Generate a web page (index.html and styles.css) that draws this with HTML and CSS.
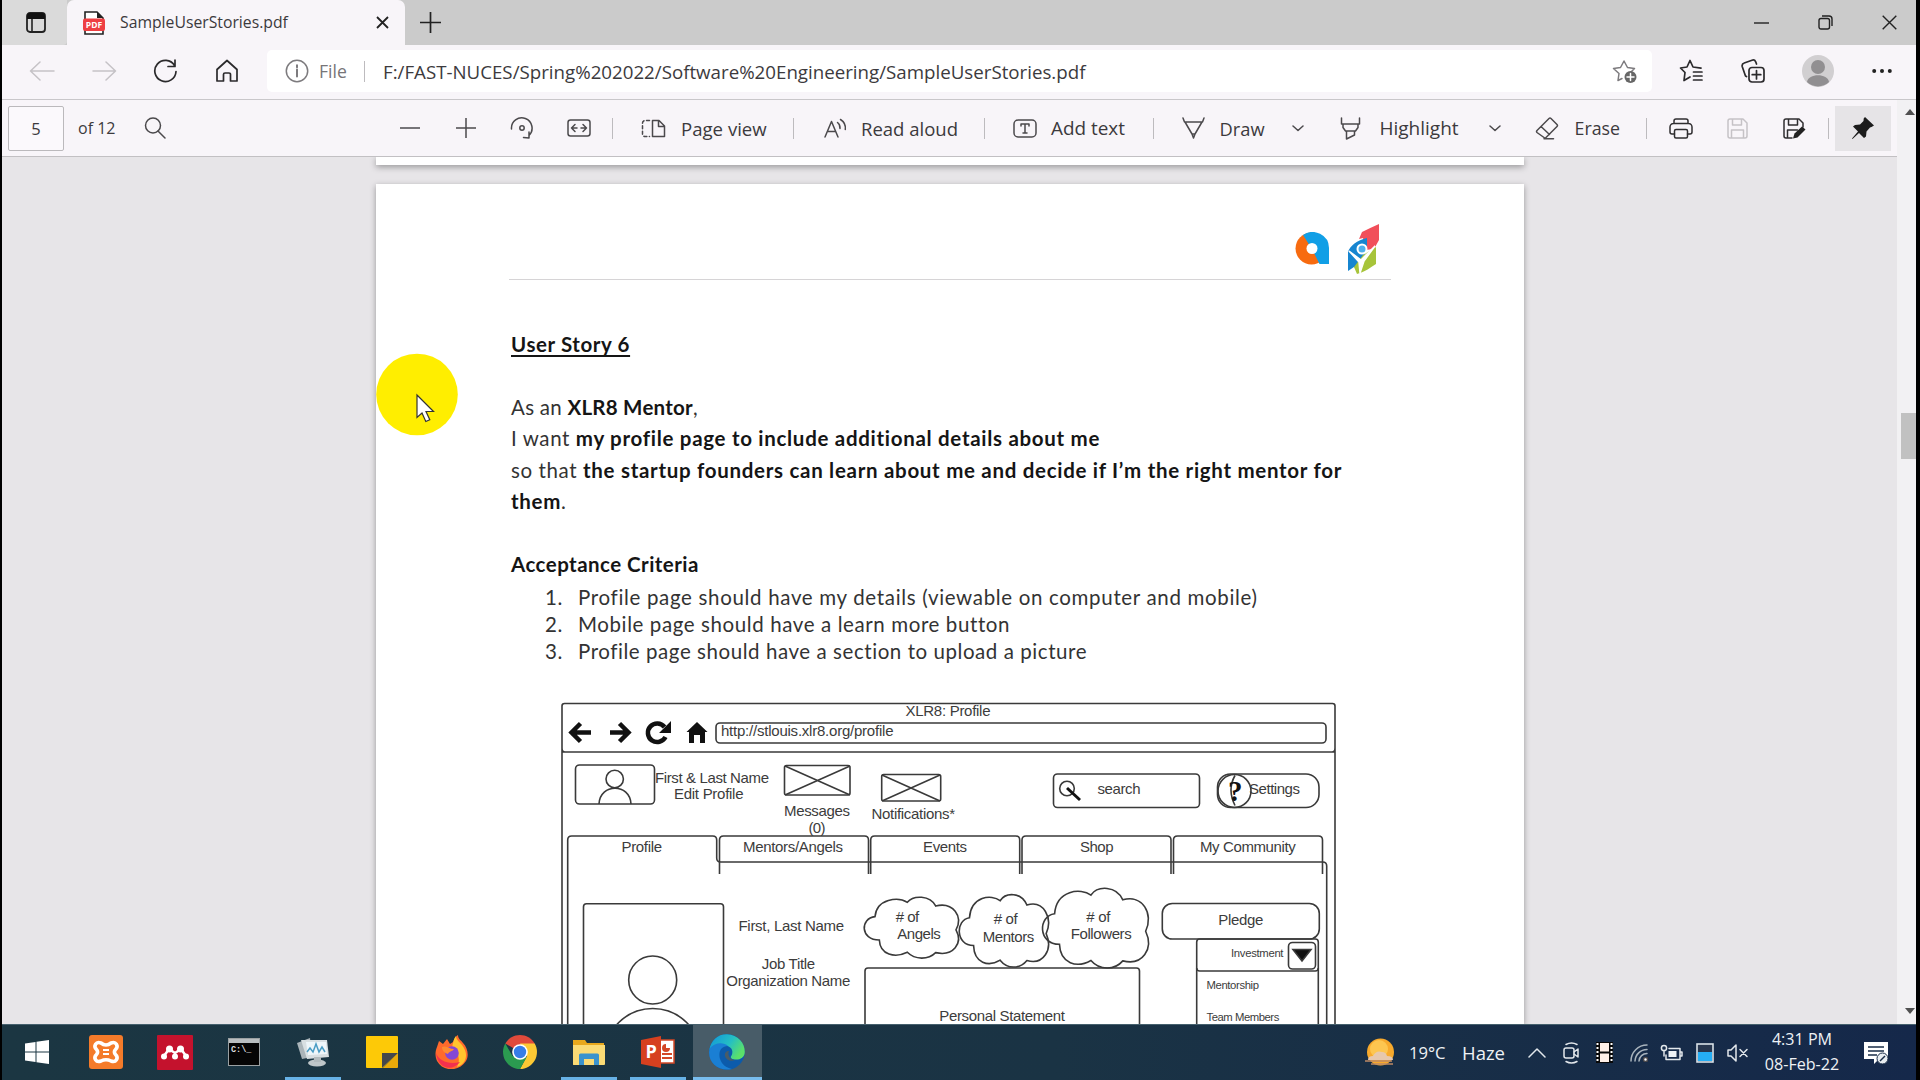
FILE: index.html
```
<!DOCTYPE html>
<html lang="en">
<head>
<meta charset="utf-8">
<title>SampleUserStories.pdf</title>
<link rel="stylesheet" href="styles.css">
</head>
<body>
<div class="screen">
  <header class="tabs">
    <div class="tab-actions">
      <svg width="20" height="21" viewBox="0 0 20 21"><rect x="1" y="1" width="18" height="19" rx="3" fill="none" stroke="#222" stroke-width="1.8"/><path d="M1 4a3 3 0 0 1 3-3h12a3 3 0 0 1 3 3v3H1z" fill="#111"/><path d="M6 7v13" stroke="#222" stroke-width="1.6"/></svg>
    </div>
    <div class="tab">
      <svg width="22" height="24" viewBox="0 0 22 24"><path d="M2 9V1h12l6 6v2M2 19v4h18v-4" fill="#fff" stroke="#222" stroke-width="1.6"/><path d="M14 1v6h6z" fill="#222"/><rect y="7.500" width="22" height="12.500" rx="2" fill="#ee3f43"/><text x="11" y="17" class="pdf-mark">PDF</text></svg>
      <span class="tab-title">SampleUserStories.pdf</span>
      <svg width="13" height="13" viewBox="0 0 13 13"><path d="M1 1l11 11M12 1L1 12" stroke="#222" stroke-width="1.8"/></svg>
    </div>
    <svg class="new-tab" width="21" height="21" viewBox="0 0 21 21"><path d="M10.500 0v21M0 10.500h21" stroke="#222" stroke-width="1.7"/></svg>
    <div class="window-buttons">
      <svg width="15" height="15" viewBox="0 0 15 15"><path d="M0 8h15" stroke="#222" stroke-width="1.400"/></svg>
      <svg width="15" height="15" viewBox="0 0 15 15"><rect x="1" y="3.500" width="10.500" height="10.500" rx="2" fill="none" stroke="#222" stroke-width="1.400"/><path d="M4 1h7a3 3 0 0 1 3 3v7" fill="none" stroke="#222" stroke-width="1.400"/></svg>
      <svg width="15" height="15" viewBox="0 0 15 15"><path d="M.7.700l13.600 13.600M14.300.700L.7 14.300" stroke="#222" stroke-width="1.400"/></svg>
    </div>
  </header>

  <nav class="address-row">
    <svg width="26" height="20" viewBox="0 0 26 20" class="line faint"><path d="M11 1L1.500 10l9.500 9M1.500 10H25"/></svg>
    <svg width="26" height="20" viewBox="0 0 26 20" class="line faint"><path d="M14 1l9.500 9L14 19M23.500 10H1"/></svg>
    <svg width="25" height="25" viewBox="0 0 25 25" class="line strong"><path d="M21.500 6.500A10.600 10.600 0 1 0 23 12.500M22 1v6.500h-7"/></svg>
    <svg width="24" height="24" viewBox="0 0 24 24" class="line strong"><path d="M2 10.500L12 1.500l10 9V22h-6.500v-6.500a1.500 1.500 0 0 0-1.500-1.500h-4a1.500 1.500 0 0 0-1.500 1.500V22H2z"/></svg>
    <div class="address">
      <svg width="24" height="24" viewBox="0 0 24 24" class="line grey"><circle cx="12" cy="12" r="10.700"/><path d="M12 10.500v7M12 6.300v2" stroke-width="2"/></svg>
      <span class="scheme">File</span>
      <i class="rule"></i>
      <span class="url">F:/FAST-NUCES/Spring%202022/Software%20Engineering/SampleUserStories.pdf</span>
      <svg width="26" height="25" viewBox="0 0 26 25" class="line grey"><path d="M6 21.500L7 14.500 1.500 9.500l7-1L12 2l3.500 6.500 7 1-3 3M6 21.500l4-2"/><circle cx="18.500" cy="18" r="6" fill="#666" stroke="none"/><path d="M18.500 14.500v7M15 18h7" stroke="#fff"/></svg>
    </div>
    <svg width="24" height="24" viewBox="0 0 24 24" class="line strong"><path d="M11 18l-6 3.500 1-8L1.500 9l6.500-1L11 1.500 14 8l8 1.200M14.500 13H23M14.500 17H23M14.500 21H23"/></svg>
    <svg width="24" height="24" viewBox="0 0 24 24" class="line strong"><rect x="8" y="8.500" width="15" height="14.500" rx="3"/><path d="M15.500 11.500v8.500M11.200 15.700h8.600M5.500 17.500l-1-.5L1.200 7.500a3 3 0 0 1 2-3.500L11 1.200a3 3 0 0 1 3.700 1.600l.8 2.200"/></svg>
    <svg width="32" height="32" viewBox="0 0 32 32"><circle cx="16" cy="16" r="16" fill="#d1cfd1"/><circle cx="16" cy="12" r="7" fill="#918f91"/><path d="M5 27c1-9 21-9 22 0a16 16 0 0 1-22 0z" fill="#918f91"/></svg>
    <svg width="20" height="6" viewBox="0 0 20 6"><circle cx="2.200" cy="3" r="2" fill="#222"/><circle cx="10" cy="3" r="2" fill="#222"/><circle cx="17.800" cy="3" r="2" fill="#222"/></svg>
  </nav>

  <main class="viewer">
    <section class="viewport">
      <div class="toolbar">
        <div class="page-number">5</div>
        <span class="small">of 12</span>
        <svg width="22" height="22" viewBox="0 0 22 22" class="line"><circle cx="9" cy="8.500" r="7.500"/><path d="M14 14l7 7"/></svg>
        <svg width="20" height="20" viewBox="0 0 20 20" class="line"><path d="M0 10h20"/></svg>
        <svg width="20" height="20" viewBox="0 0 20 20" class="line"><path d="M0 10h20M10 0v20"/></svg>
        <svg width="24" height="24" viewBox="0 0 24 24" class="line"><path d="M1.500 13A10.300 10.300 0 1 1 19 19.500M13.500 21.500l5.500.5v-6"/><circle cx="12" cy="12" r="2.200"/></svg>
        <svg width="24" height="18" viewBox="0 0 24 18" class="line"><rect x="1" y="1" width="22" height="16" rx="2.500"/><path d="M8 5.500L4.500 9 8 12.500M16 5.500L19.500 9 16 12.500M4.500 9H10M19.500 9H14"/></svg>
        <i class="rule"></i>
        <svg width="25" height="19" viewBox="0 0 25 19" class="line"><path d="M11.500 1.500H18l5.500 5.500v10.500h-12zM17.500 1.500v6h6"/><path d="M8.500 1.500H4a2.500 2.500 0 0 0-2.500 2.500v11A2.500 2.500 0 0 0 4 17.500h4.500" stroke-dasharray="3 2.500"/></svg>
        <span class="page-view">Page view</span>
        <i class="rule"></i>
        <svg width="23" height="21" viewBox="0 0 23 21" class="line"><path d="M1 19L7.500 3.500 14 19M3.500 13.500h8M13.500 4.500c2 1.500 2.700 3.500 2.500 6M16.500 1.500c4 2.500 5.300 6 4.800 10"/></svg>
        <span class="read-aloud">Read aloud</span>
        <i class="rule"></i>
        <svg width="24" height="19" viewBox="0 0 24 19" class="line"><rect x="1" y="1" width="22" height="17" rx="4"/><path d="M8 7V5h8v2M12 5v9M10 14h4"/></svg>
        <span class="add-text">Add text</span>
        <i class="rule"></i>
        <svg width="23" height="22" viewBox="0 0 23 22" class="line"><path d="M1 1l1.500 4h18L22 1M3 5l7 12h3l7-12M10 17l1.500 4 1.500-4"/></svg>
        <span>Draw</span>
        <svg width="12" height="7" viewBox="0 0 12 7" class="line"><path d="M1 1l5 4.500L11 1"/></svg>
        <svg width="22" height="23" viewBox="0 0 22 23" class="line"><path d="M1.500 1v6h18V1M3 7v3.500L5.500 14h10l2.500-3.500V7M6.500 14v8l8-4v-4"/></svg>
        <span class="highlight">Highlight</span>
        <svg width="12" height="7" viewBox="0 0 12 7" class="line"><path d="M1 1l5 4.500L11 1"/></svg>
        <svg width="24" height="23" viewBox="0 0 24 23" class="line"><path d="M2 13.500L14 1.500q1-1 2 0l6 6q1 1 0 2L11 20.500q-1 1-2 0l-7-5q-1-1 0-2zM6 9.500l8.500 8M9 21.800h9.500"/></svg>
        <span class="erase">Erase</span>
        <i class="rule"></i>
        <svg width="24" height="21" viewBox="0 0 24 21" class="line dark"><path d="M5 5.500V3a2 2 0 0 1 2-2h10a2 2 0 0 1 2 2v2.500M5.500 16H3a2 2 0 0 1-2-2V9a3.500 3.500 0 0 1 3.500-3.500h15A3.500 3.500 0 0 1 23 9v5a2 2 0 0 1-2 2h-2.500"/><rect x="5.500" y="11.500" width="13" height="8.500" rx="1.500"/></svg>
        <svg width="21" height="21" viewBox="0 0 21 21" class="line faint"><path d="M1 3a2 2 0 0 1 2-2h13l4 4v13a2 2 0 0 1-2 2H3a2 2 0 0 1-2-2zM5.500 1v6h9V1M4.500 20v-8h12v8"/></svg>
        <svg width="23" height="21" viewBox="0 0 23 21" class="line dark"><path d="M20 9V5l-4-4H3a2 2 0 0 0-2 2v15a2 2 0 0 0 2 2h6M5.500 1v6h9V1M4.500 20v-8h10"/><path d="M10 20.500l1.500-5L19 8.500l3.500 3-8 8z" fill="#222" stroke="none"/></svg>
        <i class="rule"></i>
        <div class="pin"><svg width="24" height="24" viewBox="0 0 24 24"><path d="M14 1l9 8.500-2.500 1.500-1.500.5-3.500 4-.5 5-2 1.500-5-5L1.500 23 1 22.500l6-7-5-5 2-1.500 5-.5L12.500 5l.2-2.500z" fill="#1c1c1c"/></svg></div>
      </div>

      <div class="canvas">
        <div class="sheet previous"></div>
        <article class="sheet">
          <div class="letterhead">
            <svg width="34" height="33" viewBox="0 0 34 33"><circle cx="16.500" cy="16.500" r="16" fill="#f76b10"/><path d="M8 3A16.500 16 0 0 1 34 16V32H24.500L17 17z" fill="#119fe6"/><circle cx="17" cy="16.500" r="5.500" fill="#fff"/></svg>
            <svg width="33" height="50" viewBox="0 0 33 50"><path d="M12 15l3-7Q23 4 32 0v16l-5 9-9 1-2-12z" fill="#f14f5a"/><path d="M1 47V28c2-6 9-12 19-14v9L13 46l-6-3z" fill="#1685d0"/><path d="M29 23v17c-5 3-11 8-19 10l-3-7 9-12z" fill="#a7c43a"/><path d="M2 27l12 9L28 22 17 37l-4 12-1-11z" fill="#fff" stroke="#fff" stroke-width="1.500"/><circle cx="15" cy="25" r="4.500" fill="#4fb0ec" stroke="#fff" stroke-width="2"/></svg>
          </div>
          <div class="story">
            <h1>User Story 6</h1>
            <p><span class="lead">As an <b>XLR8 Mentor</b></span>,<br>I want <b>my profile page to include additional details about me</b><br>so that <b>the startup founders can learn about me and decide if I’m the right mentor for<br>them</b>.</p>
            <h2>Acceptance Criteria</h2>
            <ol>
              <li><span>1.</span>Profile page should have my details (viewable on computer and mobile)</li>
              <li><span>2.</span>Mobile page should have a learn more button</li>
              <li><span>3.</span>Profile page should have a section to upload a picture</li>
            </ol>
            <svg class="wireframe" width="800" height="334" viewBox="550 690 800 334">
              <defs>
                <path id="cloud" vector-effect="non-scaling-stroke" d="M88 750C30 750 30 685 75 680C80 625 145 620 172 637C190 615 240 615 257 648C310 635 340 680 318 720C340 760 310 800 257 788C235 810 195 810 172 787C135 805 90 795 88 750Z"/>
              </defs>
              <g class="ink">
                <path d="M562 1030V706q0-2.500 2.500-2.500h768q2.500 0 2.500 2.500v324M562 748q0 4 3 4h767q3 0 3-4M562 752h773"/>
                <rect x="716" y="723" width="610" height="20" rx="4"/>
                <rect x="575.500" y="765" width="79" height="39" rx="4"/>
                <circle cx="614.700" cy="779" r="8.700"/><path d="M599 804c1-21 31-21 32 0"/>
                <rect x="784.500" y="765.500" width="65.500" height="29.500" rx="2"/><path d="M785 766l65 29M850 766l-65 29"/>
                <rect x="881.700" y="774.500" width="59" height="26.500" rx="2"/><path d="M882 775l58 26M940 775l-58 26"/>
                <rect x="1053.500" y="774" width="146" height="33.500" rx="4"/>
                <circle cx="1067" cy="788.500" r="7.300"/><path d="M1067 788l13 12" stroke-width="3" stroke="#111"/>
                <rect x="1217.500" y="774" width="101.500" height="33.500" rx="13"/><circle cx="1234.500" cy="791" r="16.500"/><path d="M1235 775.500q-8 14 0 30"/>
                <path d="M567.700 1030V840q0-4 4-4h141q4 0 4 4v18q0 4 4 4h602q4 0 4 4v164"/>
                <path d="M719.500 874v-34q0-4 4-4h141q4 0 4 4v34M870.700 874v-34q0-4 4-4h141q4 0 4 4v34M1022 874v-34q0-4 4-4h141q4 0 4 4v34M1173.500 874v-34q0-4 4-4h141q4 0 4 4v34"/>
                <rect x="583.500" y="903.700" width="140" height="140" rx="3"/><circle cx="652.700" cy="980" r="24"/><circle cx="652.700" cy="1056.500" r="48"/>
                <use href="#cloud" transform="translate(850 690) scale(.3333)"/>
                <use href="#cloud" transform="translate(945.800 648.200) scale(.3156 .3964)"/>
                <use href="#cloud" transform="translate(1026.500 617.300) scale(.3747 .4360)"/>
                <rect x="865" y="968" width="274.500" height="80" rx="3"/>
                <rect x="1162.300" y="903.500" width="157" height="35.500" rx="10"/>
                <rect x="1196.700" y="939" width="121.600" height="32" rx="3"/><path d="M1196.700 968v62M1318.300 968v62"/>
                <rect x="1288.500" y="942.500" width="27" height="26.500" rx="4"/><path d="M1293 949.500h18l-9 11.500z" fill="#111"/>
              </g>
              <g fill="none" stroke="#111" stroke-width="4.500"><path d="M591 732.500h-19M580.500 723.500l-9 9 9 9M610 732.500h19M619.500 723.500l9 9-9 9"/><path d="M665.500 737a9.300 9.300 0 1 1-1-10"/></g>
              <path d="M671 721v12h-12zM697 722l10.500 10h-2.500v11h-5v-8h-6v8h-5v-11h-2.500z" fill="#111"/>
              <text class="help" x="1228" y="801">?</text>
              <g class="label">
                <text x="905.500" y="716" textLength="85">XLR8: Profile</text>
                <text x="721" y="735.500" textLength="172.500">http://stlouis.xlr8.org/profile</text>
                <text x="655" y="782.500" textLength="114">First &amp; Last Name</text>
                <text x="674" y="799" textLength="69.500">Edit Profile</text>
                <text x="784" y="815.500" textLength="66">Messages</text>
                <text x="808.500" y="833" textLength="17">(0)</text>
                <text x="871.500" y="819" textLength="83.500">Notifications*</text>
                <text x="1097.500" y="794" textLength="43">search</text>
                <text x="1249" y="794" textLength="51">Settings</text>
                <text x="621.500" y="851.700" textLength="40.500">Profile</text>
                <text x="743" y="851.700" textLength="100">Mentors/Angels</text>
                <text x="923" y="851.700" textLength="44">Events</text>
                <text x="1080" y="851.700" textLength="33.500">Shop</text>
                <text x="1200" y="851.700" textLength="95.700">My Community</text>
                <text x="738.500" y="930.500" textLength="105.500">First, Last Name</text>
                <text x="761.700" y="969.300" textLength="53.500">Job Title</text>
                <text x="726.300" y="985.500" textLength="124">Organization Name</text>
                <text x="895.700" y="922.300" textLength="23.500"># of</text>
                <text x="897.300" y="939.300" textLength="43.500">Angels</text>
                <text x="993.700" y="924.300" textLength="24"># of</text>
                <text x="982.700" y="941.500" textLength="51.500">Mentors</text>
                <text x="1086.300" y="922.300" textLength="24"># of</text>
                <text x="1070.700" y="939.300" textLength="61">Followers</text>
                <text x="939.300" y="1021.300" textLength="125.700">Personal Statement</text>
                <text x="1218.300" y="925" textLength="45">Pledge</text>
                <g class="fine">
                  <text x="1231" y="957" textLength="52.500">Investment</text>
                  <text x="1206.500" y="989" textLength="52.500">Mentorship</text>
                  <text x="1206.500" y="1021.300" textLength="72.800">Team Members</text>
                </g>
              </g>
            </svg>
          </div>
          <svg class="pointer" width="82" height="84" viewBox="0 0 82 84"><circle cx="41" cy="41.500" r="40.800" fill="#ffee00"/><path d="M41 42v22.500l5-4.500 3.800 8.500 4-1.800L50 58.500h7.500z" fill="#fff" stroke="#333" stroke-width="1.200"/></svg>
        </article>
      </div>
    </section>
    <aside class="scrollbar"><i class="up"></i><i class="thumb"></i><i class="down"></i></aside>
  </main>

  <footer class="taskbar">
    <div class="apps">
      <div class="app"><svg width="24" height="24" viewBox="0 0 24 24" fill="#fff"><path d="M0 3.500l10.500-1.500v9.500H0zM11.500 1.800L24 0v11.500H11.500zM0 12.500h10.500V22L0 20.500zM11.500 12.500H24V24l-12.500-1.800z"/></svg></div>
      <div class="app"><svg width="34" height="34" viewBox="0 0 34 34"><rect width="34" height="34" rx="3" fill="#f47b2a"/><path d="M12 8c-5-2-8 3-4.500 6.500C9 16 9 18 7.500 19.500 4 23 7 28 12 26c3-1.500 7-1.500 10 0 5 2 8-3 4.500-6.500-1.500-1.500-1.500-3.500 0-5C30 11 27 6 22 8c-3 2.500-7 2.500-10 0z" fill="none" stroke="#fff" stroke-width="3.600"/><path d="M14 15h6M14 19h6" stroke="#fff" stroke-width="2.200"/></svg></div>
      <div class="app"><svg width="36" height="35" viewBox="0 0 36 35"><rect width="36" height="35" rx="1" fill="#c4122d"/><g fill="#fff"><circle cx="7" cy="21.500" r="3"/><circle cx="18" cy="21.500" r="3"/><circle cx="29" cy="21.500" r="3"/><circle cx="12.500" cy="14" r="3.500"/><circle cx="23.500" cy="14" r="3.500"/></g><path d="M7 21l5-7 6 4 6-4 5 7" fill="none" stroke="#fff" stroke-width="2.500"/></svg></div>
      <div class="app"><svg width="32" height="28" viewBox="0 0 32 28"><rect x=".5" y=".5" width="31" height="27" fill="#050505" stroke="#9aa0a2"/><rect x="1" y="1" width="30" height="4" fill="#b9bec0"/><text x="3" y="14" class="cmd">C:\_</text></svg></div>
      <div class="app running"><svg width="34" height="30" viewBox="0 0 34 30"><path d="M1 6l13-5 2 19-10 2z" fill="#aab4b9"/><path d="M5 3h26l2 17-22 2z" fill="#d8dfe2"/><path d="M10 5h20l1 12-19 1z" fill="#eef6fa"/><path d="M11 15l3-4 3 4 3-8 3 8 3-5 3 5" fill="none" stroke="#4a9cc4" stroke-width="1.500"/><ellipse cx="21" cy="26" rx="9" ry="3.500" fill="#bfc6c9"/><path d="M18 20h7v5h-7z" fill="#b2babd"/></svg></div>
      <div class="app"><svg width="32" height="32" viewBox="0 0 32 32"><path d="M0 1q0-1 1-1h30q1 0 1 1v16L17 32H1q-1 0-1-1z" fill="#fdc907"/><path d="M16 32V17h16z" fill="#44474c"/><path d="M17 32l15-15v14q0 1-1 1z" fill="#e8a90a"/></svg></div>
      <div class="app"><svg width="33" height="34" viewBox="0 0 33 34"><path d="M2 12l2-6 4 3 4-5 3 5 3-2c1-3 3-6 5-7 0 4 3 5 5 8 5 5 6 13 3 18-7 11-23 11-29 0-2-5-2-9 0-14z" fill="#ff6a2c"/><path d="M21 1c0 4 4 6 6 9 8 10 3 20-5 22 4-8 1-15-5-19 1-5 2-10 4-12z" fill="#ffc52e"/><path d="M1 18c3 8 13 12 24 9-8 10-22 7-24-9z" fill="#f3304e"/><circle cx="17" cy="18" r="6.800" fill="#8447d5"/><path d="M7 12c5-2 7 2 12 2-2 3-5 2-6 5-3-1-6-3-6-7z" fill="#ff8b31"/></svg></div>
      <div class="app"><svg width="34" height="34" viewBox="0 0 34 34"><path d="M17 17L2.300 8.500A17 17 0 0 1 31.700 8.500z" fill="#e04a3b"/><path d="M31.700 8.500A17 17 0 0 1 17 34l7-13-7-12.500z" fill="#fcc934"/><path d="M2.300 8.500A17 17 0 0 0 17 34l6.500-11.500L9.500 21z" fill="#2b9a50"/><circle cx="17" cy="17" r="7.800" fill="#fff"/><circle cx="17" cy="17" r="6.200" fill="#367de8"/></svg></div>
      <div class="app running"><svg width="32" height="27" viewBox="0 0 32 27"><path d="M0 1h12l2 3h17v22H0z" fill="#e9a81c"/><path d="M0 6h32v19q0 1-1 1H1q-1 0-1-1z" fill="#fbdb75"/><path d="M6 26V16q0-1.500 1.500-1.500h17q1.500 0 1.500 1.500v10h-5v-6H11v6z" fill="#3b93cd"/></svg></div>
      <div class="app running"><svg width="34" height="32" viewBox="0 0 34 32"><rect x="17" y="4" width="16" height="23" fill="#fff" stroke="#d24726" stroke-width="1.500"/><path d="M21 18h10M21 22h10" stroke="#d24726" stroke-width="2"/><path d="M25 8a4 4 0 1 0 4 4h-4z" fill="#d24726"/><path d="M0 4l20-4v32L0 28z" fill="#d6401f"/><text x="4.500" y="22" class="ppt">P</text></svg></div>
      <div class="app running active"><svg width="36" height="36" viewBox="0 0 36 36"><defs><linearGradient id="edge" x1="0" y1="0" x2="1" y2=".5"><stop offset=".1" stop-color="#149bd8"/><stop offset=".6" stop-color="#25bfc3"/><stop offset="1" stop-color="#5be06a"/></linearGradient></defs><circle cx="18" cy="18" r="17.800" fill="#0c5bab"/><path d="M.3 16C2 6 9 0 18 .2 29 .5 36 9 35.800 18c-.3 6-5 8-10 7.500-4-.5-5-2-3-4.500 2-5-1-9-7-9.500C9 11 3 13 .3 16z" fill="url(#edge)"/><path d="M1 14c5-6 14-6 18-2-7 0-10 6-8 13 2 6 7 9 12 10C10 38-1 29 .2 17z" fill="#1a7fd4"/><path d="M20 17c-2 4 1 9 6 9-4 2-9 0-10-4-.5-3 1-5 4-5z" fill="#485c68"/></svg></div>
    </div>
    <div class="tray">
      <svg width="31" height="30" viewBox="0 0 31 30"><circle cx="15.500" cy="14" r="13.500" fill="#f8aa2c"/><circle cx="14" cy="11" r="9" fill="#fdc650"/><path d="M3 22q0-4 5-4 3-6 9-4 4 0 5 4 6 0 6 4z" fill="#e7c8ac"/><path d="M0 23h27M6 26h22" stroke="#bc8964" stroke-width="1.600"/></svg>
      <span class="temp">19°C</span>
      <span class="haze">Haze</span>
      <svg width="18" height="11" viewBox="0 0 18 11" class="line light"><path d="M1 10l8-8 8 8"/></svg>
      <svg width="17" height="22" viewBox="0 0 17 22" class="line light"><rect x="1" y="6" width="10" height="10" rx="2"/><path d="M11 10l4-3v8l-4-3M3 2.500q5.500-3 11 0M3 19.500q5.500 3 11 0"/></svg>
      <svg width="17" height="21" viewBox="0 0 17 21"><rect width="17" height="21" fill="#080808"/><path d="M1.500 1v20M15.500 1v20" stroke="#fff" stroke-width="2" stroke-dasharray="2 2"/><rect x="4" y="1" width="9" height="8.500" fill="#fff0e8"/><rect x="4" y="11.500" width="9" height="8.500" fill="#fff0e8"/></svg>
      <svg width="18" height="18" viewBox="0 0 18 18" class="line"><path d="M1 17A16 16 0 0 1 17 1M5 17A12 12 0 0 1 17 5.500M9 17a8 8 0 0 1 8-7.500" stroke="#a9b4bd"/><circle cx="15.500" cy="15.500" r="2" fill="#fff"/></svg>
      <svg width="23" height="17" viewBox="0 0 23 17" class="line light"><path d="M9 4.500h11v11H6V11M20 8h2v4h-2"/><rect x="8.500" y="7" width="8" height="6" fill="#eef2f5" stroke="none"/><circle cx="4" cy="4" r="2.600"/><path d="M4 7v5"/></svg>
      <svg width="18" height="20" viewBox="0 0 18 20"><rect x="1" y="1" width="16" height="18" fill="#27364e" stroke="#d9e1e8" stroke-width="1.600"/><path d="M2 9h14v9H2z" fill="#25aef5"/></svg>
      <svg width="22" height="20" viewBox="0 0 22 20" class="line light"><path d="M1 7h3l5-5v16l-5-5H1zM13 6.500l7 7M20 6.500l-7 7"/></svg>
      <div class="clock"><span>4:31 PM</span><span>08-Feb-22</span></div>
      <svg width="25" height="24" viewBox="0 0 25 24"><path d="M0 1h24v17h-9l-5 5v-5H0z" fill="#fff"/><path d="M4 6h16M4 10h16M4 14h9" stroke="#192c47" stroke-width="1.500"/><circle cx="18.500" cy="17.500" r="5.500" fill="#e8edf1" stroke="#192c47"/><path d="M16 20l5-5" stroke="#192c47" stroke-width="1.500"/></svg>
    </div>
  </footer>
</div>
</body>
</html>
```
FILE: styles.css
```
* { box-sizing: border-box; }
body { margin: 0; background: #000; font-family: "Open Sans", "Noto Sans", sans-serif; color: #3c3a3d; overflow: hidden; }
svg { display: block; flex: none; }
.screen { display: flex; flex-direction: column; width: 1920px; height: 1080px; padding: 0 4px 0 2px; background: #000; }

.line { fill: none; stroke: #4b494c; stroke-width: 1.5; stroke-linecap: round; stroke-linejoin: round; }
.strong { stroke: #2b2a2c; stroke-width: 1.7; }
.dark { stroke: #2f2e30; }
.grey { stroke: #7d7b7e; }
.faint { stroke: #c5c2c6; }
.light { stroke: #e3e8ec; }
.rule { width: 1px; height: 21px; background: #bdbbbe; }

.tabs { display: flex; align-items: center; height: 45px; flex: none; background: #cbcbcb; }
.tab-actions { display: flex; align-items: center; width: 65px; height: 45px; padding-left: 24px; background: #dadada; border-bottom-right-radius: 4px; }
.tab { display: flex; align-items: center; width: 338px; height: 45px; padding: 0 16px 0 16px; background: #f8f5f9; border-radius: 7px 7px 0 0; }
.tab-title { flex: 1; margin: 0 0 1px 15px; font-size: 15.75px; }
.pdf-mark { font: 700 8.5px "Open Sans", sans-serif; fill: #fff; text-anchor: middle; }
.new-tab { margin: 0 0 1px 15px; }
.window-buttons { display: flex; gap: 49px; margin-left: auto; padding: 0 19px 1px 0; }

.address-row { display: grid; align-items: center; height: 55px; flex: none; grid-template-columns: 63px 61px 62px 52px 1412px 62px 61px 70px 20px; padding: 0 0 2px 27px; background: #f8f5f9; border-bottom: 1px solid #c9c7ca; }
.address { display: grid; align-items: center; grid-template-columns: 34px 44.5px 19.5px 1229px 26px; width: 1385px; height: 42px; padding-left: 18px; background: #fff; border-radius: 5px; }
.scheme { font-size: 17.6px; color: #777578; }
.url { font-size: 18.72px; white-space: nowrap; }

.viewer { display: flex; height: 924px; flex: none; background: #f2f1f3; }
.viewport { width: 1895px; height: 924px; }
.toolbar { display: grid; align-items: center; height: 57px; padding: 0 0 0 6px; background: #f8f5f9; border-bottom: 1px solid #c2c0c3; font-size: 18.3px; white-space: nowrap;
  grid-template-columns: 70px 66px 256px 56px 54px 57px 45px 29px 40px 112px 31px 37px 123px 28.5px 38.5px 101.5px 29.5px 37.5px 72px 48px 40px 109px 46px 40px 71.5px 22.5px 58px 56px 45px 7px 56px; }
.page-number { display: grid; place-items: center; width: 56px; height: 45px; font-size: 16.5px; background: #fbf9fc; border: 1px solid #bbb9bc; border-radius: 2px; }
.small { font-size: 16px; }
.page-view { font-size: 18.6px; }
.read-aloud { font-size: 18.5px; }
.add-text { font-size: 18.9px; }
.highlight { font-size: 19px; }
.erase { font-size: 17.8px; }
.pin { display: grid; place-items: center; width: 56px; height: 45px; background: #e6e4e7; }

.canvas { height: 867px; overflow: hidden; background: #e7e5e8; }
.sheet { position: relative; width: 1148px; height: 840px; margin-left: 374px; background: #fff; box-shadow: 0 2px 6px rgba(0, 0, 0, .35); }
.sheet.previous { height: 8px; margin-bottom: 19px; }
.letterhead { display: flex; align-items: center; gap: 18px; width: 882px; height: 96px; margin-left: 133px; padding: 34px 11px 0 0; justify-content: flex-end; border-bottom: 1px solid #d6d4d6; }
.story { padding: 49px 0 0 135px; font: 20.5px/31.4px Lato, "Open Sans", sans-serif; letter-spacing: .6px; color: #333; white-space: nowrap; }
.story h1, .story h2, .story p { margin: 0 0 31.4px; font-size: inherit; }
.story h1, .story h2, .story b { font-weight: 700; color: #151515; }
.story b { letter-spacing: .7px; }
.story .lead, .story .lead b { letter-spacing: .25px; }
.story h1 { text-decoration: underline; text-decoration-thickness: 2px; text-decoration-skip-ink: none; text-underline-offset: 3px; }
.story h2 { margin-bottom: 3.5px; letter-spacing: .46px; }
.story ol { margin: 0 0 24.5px 34px; padding: 0; list-style: none; line-height: 27.3px; }
.story li { display: grid; grid-template-columns: 33px auto; }
.story li:first-child { letter-spacing: .67px; }
.story li:last-child { letter-spacing: .56px; }
.wireframe { margin-left: 39px; }
.ink { fill: none; stroke: #3a3a3a; stroke-width: 1.6; }
.label { font: 15px "Liberation Sans", sans-serif; letter-spacing: 0; fill: #3c3c3c; }
.fine { font-size: 11.3px; }
.help { font: 700 29px "Liberation Serif", serif; letter-spacing: 0; fill: #111; }
.pointer { position: absolute; left: 0; top: 169px; }

.scrollbar { display: flex; flex-direction: column; align-items: flex-end; width: 19px; height: 924px; padding: 9px 0 10px; }
.up { margin-right: 1px; border: 5px solid transparent; border-top: 0; border-bottom: 6px solid #505050; }
.thumb { width: 15px; height: 46px; margin: 298px 0 auto; background: #c1c1c1; }
.down { margin-right: 1px; border: 5px solid transparent; border-bottom: 0; border-top: 6px solid #505050; }

.taskbar { display: flex; justify-content: space-between; height: 56px; flex: none; background: linear-gradient(90deg, #1b3642 0%, #1a3344 55%, #15284a 100%); border-top: 1px solid #45606d; color: #eef2f5; }
.apps { display: flex; }
.app { display: grid; place-items: center; width: 69.1px; height: 55px; padding-bottom: 1px; }
.running { background: linear-gradient(#67b2e6, #67b2e6) 50% 100% / 56px 3px no-repeat; }
.active { background: linear-gradient(#78bdee, #78bdee) 50% 100% / 69px 3px no-repeat #485c68; }
.cmd { font: 700 8.5px "Liberation Mono", monospace; fill: #ddd; }
.ppt { font: 700 18px "Open Sans", sans-serif; fill: #fff; }
.tray { display: grid; align-items: center; width: 551px; grid-template-columns: 44px 53px 66px 35px 33px 34px 30px 36px 31px 34.5px 102px 25px; white-space: nowrap; }
.temp { font-size: 16.6px; }
.haze { font-size: 18.5px; }
.clock { display: flex; flex-direction: column; align-items: center; width: 81px; font-size: 16.1px; line-height: 25.5px; padding-bottom: 1px; }
```
